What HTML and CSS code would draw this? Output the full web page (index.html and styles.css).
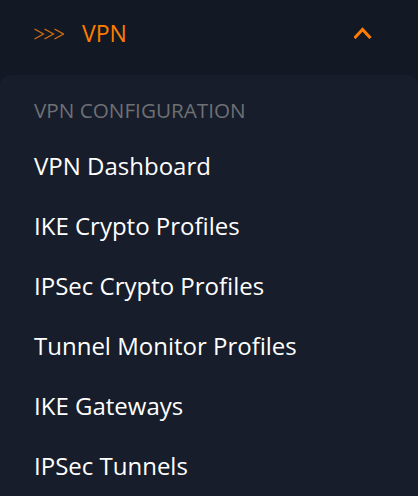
FILE: index.html
```html
<!DOCTYPE html>
<html>
<head>
<meta charset="utf-8">
<link rel="stylesheet" href="styles.css">
</head>
<body>
<div class="nav">
  <div class="header">
    <svg class="arrows" width="30" height="12" viewBox="0 0 30 12">
      <polyline points="0.5,1 9.5,6 0.5,11" />
      <polyline points="10.5,1 19.5,6 10.5,11" />
      <polyline points="20.5,1 29.5,6 20.5,11" />
    </svg>
    <span class="title">VPN</span>
    <svg class="chev" width="18" height="12" viewBox="0 0 18 12">
      <polyline points="1.5,10 8.5,2.5 15.5,10" />
    </svg>
  </div>
  <div class="panel">
    <div class="label">VPN CONFIGURATION</div>
    <ul class="items">
      <li>VPN Dashboard</li>
      <li>IKE Crypto Profiles</li>
      <li>IPSec Crypto Profiles</li>
      <li>Tunnel Monitor Profiles</li>
      <li>IKE Gateways</li>
      <li>IPSec Tunnels</li>
    </ul>
  </div>
</div>
</body>
</html>
```
FILE: styles.css
```css
html, body {
  margin: 0;
  padding: 0;
  background: #121925;
  height: 100%;
  overflow: hidden;
}
.nav {
  font-family: "Open Sans", "Noto Sans", sans-serif;
  display: flex;
  flex-direction: column;
  height: 100%;
}
.header {
  flex: 0 0 75px;
  height: 75px;
  display: flex;
  align-items: center;
  padding: 0 46px 0 34px;
  box-sizing: border-box;
}
.arrows {
  display: block;
  margin-bottom: 8px;
}
.arrows polyline {
  fill: none;
  stroke: #d9720f;
  stroke-width: 1.2;
}
.title {
  color: #ff7d00;
  font-size: 23px;
  font-weight: 500;
  margin-left: 18px;
  line-height: 23px;
  margin-bottom: 9px;
}
.chev {
  display: block;
  margin-left: auto;
  margin-bottom: 10px;
}
.chev polyline {
  fill: none;
  stroke: #ff7d00;
  stroke-width: 3;
  stroke-linecap: square;
}
.panel {
  flex: 1 0 auto;
  background: #171d2a;
  border-radius: 10px 10px 0 0;
  padding: 21px 34px 0;
}
.label {
  color: #6e7074;
  font-size: 20.7px;
  line-height: 28px;
}
.items {
  list-style: none;
  margin: 12px 0 0;
  padding: 0;
}
.items li {
  color: #ffffff;
  font-size: 24px;
  line-height: 60px;
  height: 60px;
}
```
